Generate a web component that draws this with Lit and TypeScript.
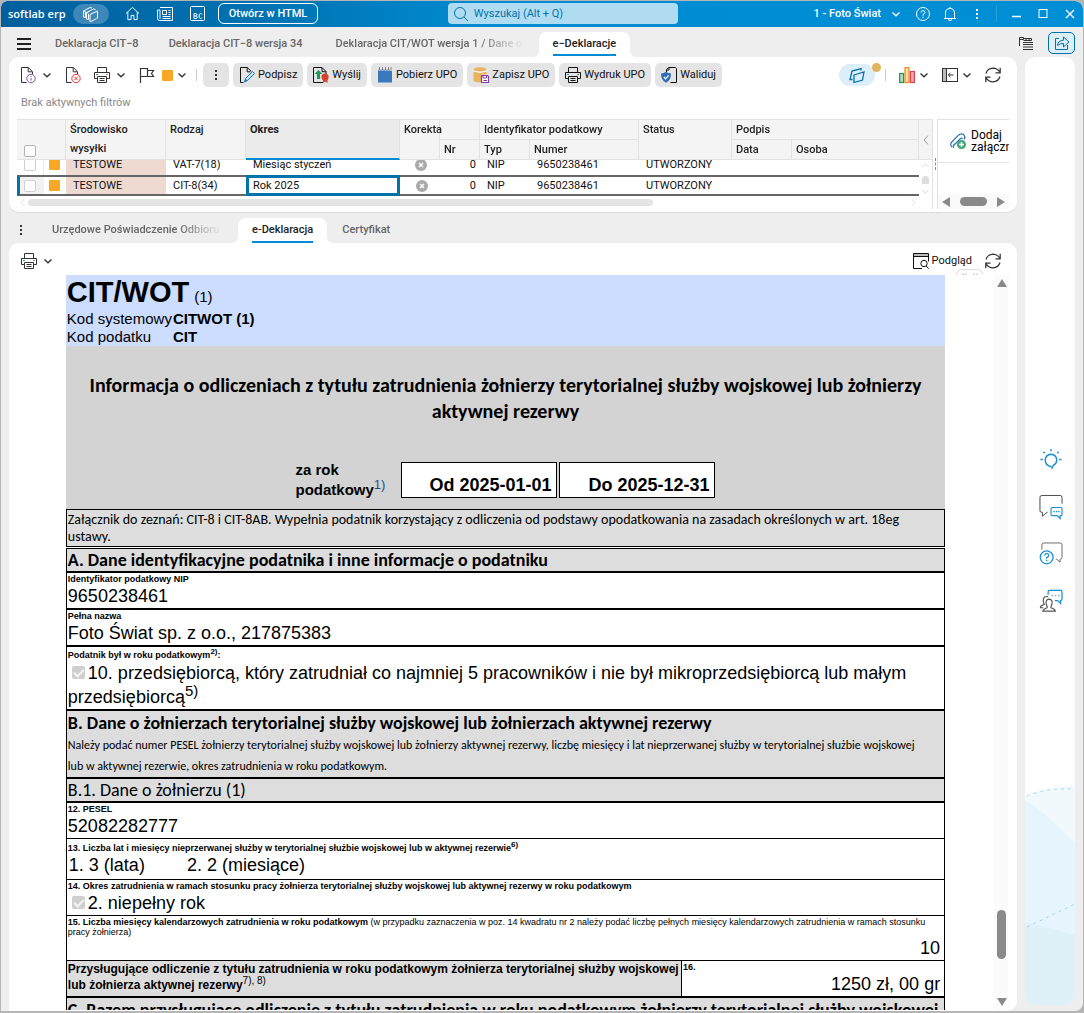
import { LitElement, html, css, svg, nothing } from "lit";
import { customElement, query } from "lit/decorators.js";
import { classMap } from "lit/directives/class-map.js";

const page = svg`<path d="M6.5 15.5H1.5V.5h6.8l4.2 4.2v2.8M8.2.7v4.1h4"/>`;

const glyphs: Record<string, unknown> = {
  chevron: svg`<path d="M4.500 6.500 8 9.800l3.500-3.300" stroke-width="1.300"/>`,
  chevronLeft: svg`<path d="M10 3.500 6 8l4 4.500"/>`,
  chevronRight: svg`<path d="M6 3.500 10 8l-4 4.500"/>`,
  chevronUp: svg`<path d="M4 10 8 6l4 4"/>`,
  chevronDown: svg`<path d="M4 6 8 10l4-4"/>`,
  menu: svg`<path d="M1 3h14M1 8h14M1 13h14" stroke-width="2"/>`,
  dots: svg`<g fill="currentColor" stroke="none"><rect x="7" y="3" width="2" height="2"/><rect x="7" y="7" width="2" height="2"/><rect x="7" y="11" width="2" height="2"/></g>`,
  layers: svg`<path d="M2.500 11.500.5 11V5L7 1.500l2 .5M5.500 13.500 3.500 13V6.500L10.500 3l2 .5M7 15.500V8.500L14.500 5v7L8 15.500zM.5 5l2 .5M3.500 6.500l2 .5M5.500 8v5.500M2.500 6v5.500"/>`,
  stack: svg`<path d="M3.500 12.500H1L3 4l9-2.500v2M5 8l10-3-1.500 8L5 15.500z" stroke-width="1.300"/>`,
  home: svg`<path d="M1 8 8 1.500 15 8M3 6.500v8h3.500V10h3v4.500H13v-8"/>`,
  news: svg`<path d="M3 1.500h12.500v13H2.500A2 2 0 0 1 .5 12.500V4H3v9M5.500 4.500h4v4h-4zM11.500 4.500h2M11.500 6.500h2M11.500 8.500h2M5.500 10.500h8M5.500 12.500h8"/>`,
  bc: svg`<rect x=".5" y=".5" width="14" height="14" rx="1"/><path d="M4 7.500v5h2q1.300 0 1.300-1.300T6 10H4M4 7.500h1.800Q7 7.600 7 8.700T5.800 10M12 8.500Q11.500 7.500 10.500 7.500 9 7.600 9 10t1.500 2.500q1 0 1.500-1"/>`,
  search: svg`<circle cx="7" cy="7" r="5.500"/><path d="m11 11 4 4"/>`,
  help: svg`<circle cx="8" cy="8" r="6.500"/><path d="M6 6.500Q6 4.700 8 4.700t2 1.700Q10 7.500 8 8.500v1.200M8 10.800v1.200"/>`,
  bell: svg`<path d="M8 1v1.500M2 12.500h12M3.500 12.500V7Q3.500 2.500 8 2.500T12.500 7v5.500M6.500 13q0 1.800 1.500 1.800T9.500 13"/>`,
  minimize: svg`<path d="M4 10.500h9" stroke-width="1.300"/>`,
  maximize: svg`<rect x="4" y="3.500" width="8" height="8"/>`,
  close: svg`<path d="m4 4 8 8M12 4l-8 8" stroke-width="1.300"/>`,
  lines: svg`<path d="M1.500 11V2.500h4v2h-4M5.500 3.500h8v2h-8M8 3.500v2M11 3.500v2M5 7.500h10M5 9.500h10M5 12h10M5 14.500h10"/>`,
  share: svg`<path d="M5 3.500H1.500v11h12V10M3.500 10.500Q4 5.500 9.500 5.200V2l5.500 5-5.500 5V8.500Q6 8.200 3.500 10.500z"/>`,
  pageInfo: svg`${page}<g stroke="#8b4a9c"><circle cx="11" cy="11.500" r="4.200"/><path d="M11 11v2.700M11 9v1"/></g>`,
  pageDelete: svg`${page}<g stroke="#e8383d"><circle cx="11" cy="11.500" r="4.200"/><path d="m9.300 9.800 3.400 3.400M12.700 9.800l-3.400 3.400"/></g>`,
  printer: svg`<path d="M3.500 5V.5h9V5M3.500 11.500H.5V5.500h15v6h-3M3.500 9.500h9v6h-9zM5.500 11.500h5M5.500 13.500h5M12.500 7.500h1" /><path d="M2 7.500h2" stroke="#2f8fd0"/>`,
  flag: svg`<path d="M1.500 16V1.500h7v8h-7M8.500 3.500h6l-2 3 2 3h-6" stroke-width="1.200"/>`,
  sign: svg`<path d="M4.500 15.500h-3V.5h6.800l4.200 4.200M8.200.7v4.100h3"/><path d="m5.500 15 1-3.500L13.500 4.500l2 2L8.500 13.500z" fill="#bfe0f5" stroke="#1f78b8"/><path d="M5.500 15l3-1.500-2-2z" fill="#1f78b8" stroke="none"/>`,
  send: svg`<path d="M10 15.500H.5V.5H9l4 4v3M9 .7v4h3.800"/><path d="M5.500 3 9.500 7H7v5H4V7H1.500z" fill="#1a9a60" stroke="none"/><circle cx="12" cy="10" r="3.600" fill="#d5432a" stroke="none"/><path d="M10 12h4.500v4L12 14.500 10 16z" fill="#d5432a" stroke="none"/>`,
  calendar: svg`<path d="M1 2.500h14v13H1z" fill="#3b78bd" stroke="none"/><path d="M2.500 0v4M5.500 0v4M8.500 0v4M11.500 0v4M14 0v4" stroke="#fff" stroke-width="1.600"/><path d="M2.500 0v3.500M5.500 0v3.500M8.500 0v3.500M11.500 0v3.500M14 0v3.500" stroke="#555" stroke-width=".8"/>`,
  save: svg`<ellipse cx="7" cy="2.500" rx="6.500" ry="2.200" fill="#e9b35c" stroke="none"/><path d="M.5 4.500q6.500 2.500 13 0v3H8v7.700q-5 .3-7.500-1.200z" fill="#e9b35c" stroke="none"/><path d="M.5 4q6.500 2.500 13 0" stroke="#fff" stroke-width=".8"/><path d="M8.500 8.500h6l1 1v6h-7z" fill="#fff" stroke="#8a3fa0" stroke-width="1.200"/><path d="M10 8.500v2.500h3.500V8.500M10.500 13.500h3.500" stroke="#8a3fa0"/>`,
  validate: svg`<path d="M5.500 5V2.500l2-2h6.800l1.200 1.200v13.800H9.500M5.500 3H8V.7"/><path d="M0 6.500q3 0 5-1.700 2 1.700 5 1.700 0 7-5 9.300-5-2.300-5-9.300z" fill="#2f6eb5" stroke="none"/><path d="m2.800 10 1.800 1.800 3-3.500" stroke="#fff" stroke-width="1.300"/>`,
  chart: svg`<rect x=".6" y="6.500" width="4" height="9" fill="#a9dcbc" stroke="#1a9c50" stroke-width="1.200"/><rect x="6" y=".6" width="4" height="15" fill="#fbdca6" stroke="#ef8a2b" stroke-width="1.200"/><rect x="11.400" y="4.500" width="4" height="11" fill="#f6a9b2" stroke="#e0434f" stroke-width="1.200"/>`,
  panel: svg`<rect x=".5" y="1.500" width="15" height="13"/><path d="M1 2h3v12H1z" fill="#bbb" stroke="none"/><path d="M4.500 1.500v13M6.500 8h5M8.500 5.800 6.300 8l2.200 2.200"/>`,
  refresh: svg`<path d="M1 6.500Q2.500 1.500 8 1.200q4.500.2 7 4M15.200.8v5h-4.700M15 9.500q-1.500 5-7 5.300-4.500-.2-7-4M.8 15.200v-5h4.700" stroke-width="1.200"/>`,
  preview: svg`<path d="M9 15.500H.5V.5h15v8"/><path d="M1 1h14v2.500H1z" fill="#bbb" stroke="none"/><path d="M.5 3.500h15"/><circle cx="11" cy="10.500" r="3.200"/><path d="m13.200 13 2.500 2.700"/>`,
  clip: svg`<g stroke="#2d6fb3" stroke-width="1.200"><path d="M2 14Q-.5 11.500 1.800 9L8.500 2.200Q11-.2 13.600 1.600 16 4 14 6.500"/><path d="M3.500 12.500 10.500 5.500Q12 4.500 12.500 6M4 14.500Q2 14 4.500 11"/></g><circle cx="11.500" cy="11.500" r="4.500" fill="#3fa778" stroke="none"/><path d="M11.500 9v5M9 11.500h5" stroke="#fff" stroke-width="1.500"/>`,
  bulb: svg`<g stroke="#1b8fd2" stroke-width="1.500"><path d="M12.500 19.500Q6 18.500 6 12.500 6.500 7 12 6.500q5.500.5 6 6-.2 4-3.500 5.500l-1.800 3.500"/><path d="M12 1v2.500M4 4l1.500 1.500M20 4l-1.500 1.500M1 12h2.500M20.500 12H23"/></g>`,
  chat: svg`<path d="M23.500 9V2.500q0-2-2-2h-19q-2 0-2 2v14q0 1.500 2 1.500H3v4l5-4h.5" stroke="#444"/><g stroke="#1b8fd2" stroke-width="1.200"><path d="M12.500 13h9.500q1.500 0 1.500 1.500V20q0 1.500-1.500 1.500h-.5v3l-3-3h-5q-1.500 0-1.500-1.500v-5.500q0-1.500 1.500-1.500z"/><path d="M14.500 17.300h1.500M17 17.300h1.500M19.500 17.300h1.500"/></g>`,
  ask: svg`<path d="M2.500 8V3q0-2 2-2h17q2 0 2 2v13q0 2-2 2v3L18 18h-1" stroke="#666"/><g stroke="#1b8fd2" stroke-width="1.300"><circle cx="7.500" cy="16" r="6.700"/><path d="M5.300 14q.2-2 2.200-2t2.200 2q0 1.200-2.200 2.300v1.200M7.500 18.500V20"/></g>`,
  people: svg`<path d="M9 6V3q0-1.500 1.500-1.500h11.500q1.500 0 1.500 1.500v7.500q0 1.500-1.500 1.500v3L19 12h-3" stroke="#1b8fd2" stroke-width="1.300"/><path d="M12.500 7h1.500M16 7h1.500M19.500 7H21" stroke="#1b8fd2"/><path d="M9 8Q3.500 7 4 12.500q.3 2.500 1 3.500Q1 17 1 19.500h3M10 10.500q-4 .5-3 5 .3 1.500 1 2.500v1.500q-4 1-4.500 3.500h13q-.5-2.500-4.500-3.500v-1.500q.7-1 1-2.500 1-4.500-3-5z" stroke="#555" stroke-width="1.200"/>`,
};

const icon = (name: string, size = 16) =>
  html`<svg class="icon" width=${size} height=${size} viewBox=${size > 20 ? "0 0 24 25" : "0 0 16 16"} aria-hidden="true"
    fill="none" stroke="currentColor" stroke-width="1">${glyphs[name]}</svg>`;

const base = css`
  * { box-sizing: border-box; }
  .icon { display: block; flex: none; overflow: visible; }
  button { font: inherit; color: inherit; background: none; border: 0; padding: 0; margin: 0; cursor: pointer;
    display: flex; align-items: center; justify-content: center; flex: none; }
  .check { appearance: none; margin: 0; width: 12px; height: 12px; border: 1px solid #b4b4b4; border-radius: 2px;
    background: #fff; display: block; }
`;

const tabStyles = css`
  .tabs { display: flex; align-items: flex-end; color: #666; font-weight: 500; }
  .tab { height: 25px; padding: 0 14px 2px; font-weight: 500; position: relative; white-space: nowrap; }
  .tab.fade { overflow: hidden; justify-content: flex-start;
    -webkit-mask-image: linear-gradient(90deg, #000 75%, transparent 100%);
    mask-image: linear-gradient(90deg, #000 75%, transparent 100%); }
  .tab.active { background: #fff; color: #222; border-radius: 8px 8px 0 0; }
  .tab.active::before, .tab.active::after { content: ""; position: absolute; bottom: 0; width: 6px; height: 6px; }
  .tab.active::before { left: -6px; background: radial-gradient(circle at 0 0, transparent 6px, #fff 6px); }
  .tab.active::after { right: -6px; background: radial-gradient(circle at 100% 0, transparent 6px, #fff 6px); }
  .underline { position: absolute; left: 14px; right: 14px; bottom: 1px; height: 2px; background: #008bd2; }
`;

@customElement("title-bar")
class TitleBar extends LitElement {
  static styles = [base, css`
    :host { display: block; color: #fff; }
    .bar { height: 26px; display: flex; align-items: center; justify-content: space-between; padding: 0 5px 1px 7px;
      background: linear-gradient(90deg, #005f9e 0, #0074b3 25%, #008bd2 45%, #008fd6 100%); border-radius: 6px 8px 0 0; }
    .group { display: flex; align-items: center; }
    .brand { font: 600 11px/20px "Open Sans", sans-serif; width: 58px; white-space: nowrap; }
    .pill { width: 36px; height: 20px; border-radius: 10px; background: #3d88b8; margin-left: 7px; }
    .icons { display: flex; gap: 17px; margin: 0 12px 0 16px; }
    .outlined { height: 21px; width: 100px; border: 1px solid #fff; border-radius: 6px; font-weight: 500; }
    .search { display: flex; align-items: center; gap: 5px; width: 230px; height: 21px; padding: 0 5px; border-radius: 4px;
      margin-right: 6px; background: #b0dcf2; color: #0073ab; }
    .search input { flex: 1; min-width: 0; border: 0; background: none; outline: 0; padding: 0; font: inherit; color: inherit; }
    .search input::placeholder { color: #0073ab; opacity: 1; }
    .tools { gap: 11px; }
    .company { gap: 7px; font-weight: 500; }
    .sep { width: 1px; height: 16px; background: #2f9fdc; }
  `];
  render() {
    return html`<header class="bar">
      <div class="group">
        <span class="brand">softlab erp</span>
        <button class="pill" aria-label="Moduły">${icon("layers")}</button>
        <div class="icons">
          <button aria-label="Start">${icon("home", 15)}</button>
          <button aria-label="Aktualności">${icon("news")}</button>
          <button aria-label="BC">${icon("bc")}</button>
        </div>
        <button class="outlined">Otwórz w HTML</button>
      </div>
      <label class="search">${icon("search")}<input type="text" placeholder="Wyszukaj (Alt + Q)" aria-label="Wyszukaj" /></label>
      <div class="group tools">
        <button class="company">1 - Foto Świat ${icon("chevron")}</button>
        <button aria-label="Pomoc">${icon("help")}</button>
        <button aria-label="Powiadomienia">${icon("bell")}</button>
        <button aria-label="Więcej">${icon("dots")}</button>
        <span class="sep"></span>
        <button aria-label="Minimalizuj">${icon("minimize")}</button>
        <button aria-label="Maksymalizuj">${icon("maximize")}</button>
        <button aria-label="Zamknij">${icon("close")}</button>
      </div>
    </header>`;
  }
}

interface Row { kind: string; period: string; selected: boolean }

@customElement("records-panel")
class RecordsPanel extends LitElement {
  static styles = [base, css`
    :host { display: block; }
    .panel { background: #fff; border-radius: 10px; padding: 6px 8px 3px; box-shadow: 0 1px 0 #dcdcdc; }
    .toolbar { display: flex; align-items: center; height: 24px; padding: 0 8px 0 3px; color: #333; }
    .icons { display: flex; align-items: center; }
    .icons .drop { margin: 0 10px 0 3px; }
    .icons .drop.near { margin: 0 6px 0 1px; }
    .right .drop { margin: 0 10px 0 1px; }
    .space { width: 13px; }
    .space.small { width: 7px; }
    .swatch { width: 11px; height: 11px; border-radius: 1px; background: #f9a825; display: block; }
    .sep { width: 1px; height: 12px; background: #ccc; }
    .buttons { display: flex; gap: 4px; margin-left: 6px; }
    .btn { height: 24px; padding: 0 6px; gap: 3px; border-radius: 5px; background: #e4e4e4; color: #111; white-space: nowrap; }
    .more { padding: 0 5px; color: #333; }
    .right { margin-left: auto; display: flex; align-items: center; }
    .pill { position: relative; width: 36px; height: 22px; border-radius: 11px; background: #dceef8; color: #0073ab; margin-right: 10px; }
    .dot { position: absolute; right: -6px; top: -1px; width: 9px; height: 9px; border-radius: 50%; background: #e0b55c; }
    .filters { margin: 0; padding: 8px 4px; line-height: 16px; color: #888; }
    .content { display: flex; height: 90px; }
    .grid { flex: 1; min-width: 0; display: flex; flex-direction: column; }
    .scroll { height: 77px; overflow: hidden; background: #fff; }
    table { width: 100%; border-collapse: separate; border-spacing: 0; table-layout: fixed; color: #111; }
    th, td { padding: 0; font-weight: 400; text-align: left; white-space: nowrap; overflow: hidden; height: 21px; }
    thead { position: sticky; top: 0; z-index: 1; }
    thead th { background: #f4f4f4; font-weight: 500; color: #222; border-top: 1px solid #e2e2e2; border-right: 1px solid #e2e2e2;
      padding: 0 4px; vertical-align: top; line-height: 19px; height: 20px; }
    thead tr:last-child th, thead th[rowspan] { border-bottom: 1px solid #e2e2e2; }
    thead th.korekta { overflow: visible; }
    thead th.pick { padding: 25px 0 0 7px; }
    th.wrap { white-space: normal; }
    thead th.current[rowspan] { background: #ebebeb; font-weight: 700; border-bottom: 2px solid #008bd2; }
    tbody td { padding: 0 7px; border-right: 1px solid transparent; line-height: 17px; }
    tbody td.env { background: #efdad2; }
    td.tick { padding: 0 7px; border-right: 1px solid #e8e8e8; }
    td.tick .check { border-color: #cfcfcf; }
    td.mark { padding: 0 5px; }
    td.num { text-align: right; padding: 0 3px; }
    td.no { padding: 0 0 0 3px; }
    .cross { display: block; margin: auto; width: 12px; height: 12px; }
    tr.selected td { border-top: 2px solid #666; border-bottom: 2px solid #666; border-right: 0; }
    tr.selected td.num { padding-right: 4px; }
    tr.selected td.tick { border-left: 3px solid #0073ab; padding: 0 4px; background: #f2f2f2; }
    tr.selected td.focus { border: 3px solid #0073ab; padding: 0 4px; line-height: 15px; }
    .hbar { display: flex; align-items: center; height: 13px; color: #ccc; }
    .htrack { flex: 1; }
    .hthumb { width: 71%; height: 7px; border-radius: 4px; background: #e4e4e4; }
    .gutter { width: 14px; display: flex; flex-direction: column; align-items: center; color: #ccc; border-right: 1px solid #e2e2e2; flex: none; }
    .collapse { width: 100%; height: 41px; background: #f4f4f4; border-top: 1px solid #e2e2e2; border-bottom: 1px solid #e2e2e2; color: #999; }
    .vthumb { width: 7px; height: 8px; margin: 5px 0 2px; border-radius: 4px 4px 0 0; background: #ddd; }
    .gutter .icon { margin: -1px 0; }
    .split { width: 5px; border-right: 1px solid #e2e2e2; display: flex; align-items: center; justify-content: center; flex: none; }
    .grip { width: 1px; height: 12px; border-left: 1px dashed #888; }
    .files { width: 71px; display: flex; flex-direction: column; overflow: hidden; border-top: 1px solid #e2e2e2; flex: none; }
    .add { height: 43px; border-bottom: 1px solid #e2e2e2; width: 100%; justify-content: flex-start; padding-left: 12px; gap: 5px;
      text-align: left; font-size: 12px; line-height: 12px; color: #000; }
    .fbar { margin-top: auto; display: flex; align-items: center; justify-content: space-between; height: 15px; padding: 0 4px; background: #fafafa; }
    .fthumb { width: 27px; height: 9px; border-radius: 5px; background: #8a8a8a; }
  `];

  @query(".scroll") scroller!: HTMLElement;

  firstUpdated() {
    this.scroller.scrollTop = this.scroller.scrollHeight;
  }

  rows: Row[] = [
    { kind: "VAT-7(18)", period: "Miesiąc styczeń", selected: false },
    { kind: "CIT-8(34)", period: "Rok 2025", selected: true },
  ];

  renderRow(r: Row) {
    return html`<tr class=${classMap({ selected: r.selected })}>
      <td class="tick"><input class="check" type="checkbox" aria-label=${r.kind} /></td>
      <td class="mark"><span class="swatch"></span></td>
      <td class="env">TESTOWE</td>
      <td>${r.kind}</td>
      <td class=${classMap({ focus: r.selected })}>${r.period}</td>
      <td class="no"><svg class="cross" viewBox="0 0 12 12" role="img" aria-label="Nie"><circle cx="6" cy="6" r="6" fill="#aaa"/><path d="m4 4 4 4M8 4 4 8" stroke="#fff" stroke-width="1.500"/></svg></td>
      <td class="num">0</td>
      <td>NIP</td>
      <td>9650238461</td>
      <td>UTWORZONY</td>
      <td></td>
      <td></td>
    </tr>`;
  }

  renderTriangle(points: string) {
    return html`<svg class="icon" width="8" height="10" viewBox="0 0 8 10" aria-hidden="true"><polygon points=${points} fill="#8a8a8a"/></svg>`;
  }

  render() {
    const actions: [string, string][] = [
      ["sign", "Podpisz"], ["send", "Wyślij"], ["calendar", "Pobierz UPO"],
      ["save", "Zapisz UPO"], ["printer", "Wydruk UPO"], ["validate", "Waliduj"],
    ];
    return html`<section class="panel">
      <div class="toolbar">
        <div class="icons">
          <button aria-label="Informacje">${icon("pageInfo")}</button>
          <button class="drop" aria-label="Opcje informacji">${icon("chevron")}</button>
          <button aria-label="Usuń">${icon("pageDelete")}</button>
          <span class="space"></span>
          <button aria-label="Drukuj">${icon("printer")}</button>
          <button class="drop" aria-label="Opcje druku">${icon("chevron")}</button>
          <button aria-label="Oznacz">${icon("flag")}</button>
          <span class="space small"></span>
          <button aria-label="Kolor"><span class="swatch"></span></button>
          <button class="drop near" aria-label="Wybór koloru">${icon("chevron")}</button>
          <span class="sep"></span>
        </div>
        <div class="buttons">
          <button class="btn more" aria-label="Więcej">${icon("dots")}</button>
          ${actions.map(([glyph, label]) => html`<button class="btn">${icon(glyph)}${label}</button>`)}
        </div>
        <div class="right icons">
          <button class="pill" aria-label="Warstwy">${icon("stack")}<span class="dot"></span></button>
          <span class="sep"></span>
          <span class="space"></span>
          <button aria-label="Wykres">${icon("chart")}</button>
          <button class="drop" aria-label="Opcje wykresu">${icon("chevron")}</button>
          <button aria-label="Panel">${icon("panel")}</button>
          <button class="drop" aria-label="Opcje panelu">${icon("chevron")}</button>
          <button aria-label="Odśwież">${icon("refresh")}</button>
        </div>
      </div>
      <p class="filters">Brak aktywnych filtrów</p>
      <div class="content">
        <div class="grid">
          <div class="scroll">
            <table>
              <colgroup>
                ${[27, 22, 100, 80, 154, 40, 40, 50, 109, 93, 60].map((w) => html`<col style="width:${w}px" />`)}
                <col />
              </colgroup>
              <thead>
                <tr>
                  <th class="pick" colspan="2" rowspan="2"><input class="check" type="checkbox" aria-label="Zaznacz wszystkie" /></th>
                  <th class="wrap" rowspan="2">Środowisko wysyłki</th>
                  <th rowspan="2">Rodzaj</th>
                  <th class="current" rowspan="2">Okres</th>
                  <th class="korekta" rowspan="2">Korekta</th>
                  <th></th>
                  <th colspan="2">Identyfikator podatkowy</th>
                  <th rowspan="2">Status</th>
                  <th colspan="2">Podpis</th>
                </tr>
                <tr><th>Nr</th><th>Typ</th><th>Numer</th><th>Data</th><th>Osoba</th></tr>
              </thead>
              <tbody>${this.rows.map((r) => this.renderRow(r))}</tbody>
            </table>
          </div>
          <div class="hbar">${icon("chevronLeft", 11)}<div class="htrack"><div class="hthumb"></div></div>${icon("chevronRight", 11)}</div>
        </div>
        <div class="gutter">
          <button class="collapse" aria-label="Zwiń">${icon("chevronLeft")}</button>
          ${icon("chevronUp", 13)}<span class="vthumb"></span>${icon("chevronDown", 13)}
        </div>
        <div class="split"><span class="grip"></span></div>
        <div class="files">
          <button class="add">${icon("clip")}<span>Dodaj załącznik</span></button>
          <div class="fbar">${this.renderTriangle("8,0 0,5 8,10")}<span class="fthumb"></span>${this.renderTriangle("0,0 8,5 0,10")}</div>
        </div>
      </div>
    </section>`;
  }
}

@customElement("tax-form")
class TaxForm extends LitElement {
  static styles = [base, css`
    :host { display: block; width: 90%; margin: 0 auto; color: #000; font-family: "Liberation Sans", Arial, sans-serif; }
    .codes { background: #ccddff; padding-left: 1px; font-size: 15px; }
    h1 { margin: 0; font-size: 29px; line-height: 35px; }
    h1 small { font-size: 15px; font-weight: 400; margin-left: 5px; line-height: 15px; }
    .codes table { border-collapse: collapse; line-height: 18px; }
    .codes td, .codes th { padding: 0; text-align: left; font-weight: 400; white-space: nowrap; }
    .codes th { min-width: 105px; padding-right: 1px; }
    .codes td { font-weight: 700; }
    .head { background: #d3d3d3; padding: 26px 0 9px; }
    h2 { margin: 0 0 38px; text-align: center; font: 700 20px/26px Carlito, Lato, sans-serif; }
    .year { display: flex; justify-content: center; gap: 2px; font-weight: 700; }
    .year p { margin: -2px 0 0; width: 104px; font-size: 15px; line-height: 20px; }
    sup { line-height: 0; }
    .ref { color: #1f4e8c; font-weight: 400; font-size: 13px; }
    .date { width: 156px; height: 36px; background: #fff; border: 1px solid #000; padding: 12px 5px 0 0; text-align: right; font-size: 18px; line-height: 21px; }
    .note { margin: 0 0 1px; border: 1px solid #000; background: #ddd; padding: 1px 1px; font: 14px/17px Carlito, Lato, sans-serif; }
    .sheet { border: 1px solid #000; border-bottom: 0; }
    .row { border-bottom: 1px solid #000; padding: 0 1px; }
    .thick { border-bottom-width: 2px; }
    .gray { background: #ddd; }
    h3 { margin: 0; font: 700 18px/22px Carlito, Lato, sans-serif; }
    h3.tall { line-height: 24px; }
    h3.light { font-weight: 400; }
    .hint { margin: 0; padding-right: 16px; font: 12px/21px Carlito, Lato, sans-serif; }
    .label { display: block; font-size: 9px; line-height: 12px; font-weight: 700; }
    .label sup { font-size: 8px; }
    .label.two { line-height: 10px; padding-top: 1px; }
    .label.two span { font-weight: 400; }
    .value { font-size: 18px; line-height: 23px; }
    .value.wide { line-height: 24px; }
    .value.end { text-align: right; padding-right: 3px; }
    .value sup { font-size: 15px; }
    .company { padding-top: 2px; }
    .service { padding-top: 3px; padding-bottom: 2px; }
    .pair { display: flex; gap: 42px; padding-left: 1px; }
    .done { appearance: none; display: inline-block; width: 13px; height: 13px; margin: 0 3px 0 4px; border-radius: 2px; background: #cfcfcf; position: relative; }
    .done::before { content: ""; position: absolute; left: 4px; top: 1px; width: 4px; height: 8px; border: solid #f4f4f4; border-width: 0 2px 2px 0; transform: rotate(45deg); }
    .relief { display: grid; grid-template-columns: 615fr 262fr; padding: 0; }
    .relief .what { background: #ddd; border-right: 1px solid #000; padding: 0 1px; font-size: 12px; line-height: 16px; font-weight: 700; }
    .what sup { font-weight: 400; font-size: 10px; }
    .relief .amount { padding: 0 1px; }
  `];

  field(label: unknown, value: string, extra = "") {
    return html`<div class="row ${extra}"><span class="label">${label}</span><div class="value">${value}</div></div>`;
  }

  render() {
    return html`<article>
      <div class="codes">
        <h1>CIT/WOT<small>(1)</small></h1>
        <table>
          <tr><th>Kod systemowy</th><td>CITWOT (1)</td></tr>
          <tr><th>Kod podatku</th><td>CIT</td></tr>
        </table>
      </div>
      <div class="head">
        <h2>Informacja o odliczeniach z tytułu zatrudnienia żołnierzy terytorialnej służby wojskowej lub żołnierzy aktywnej rezerwy</h2>
        <div class="year">
          <p>za rok<br />podatkowy<sup class="ref">1)</sup></p>
          <div class="date">Od 2025-01-01</div>
          <div class="date">Do 2025-12-31</div>
        </div>
      </div>
      <p class="note">Załącznik do zeznań: CIT-8 i CIT-8AB. Wypełnia podatnik korzystający z odliczenia od podstawy opodatkowania na zasadach określonych w art. 18eg ustawy.</p>
      <div class="sheet">
        <div class="row thick gray"><h3>A. Dane identyfikacyjne podatnika i inne informacje o podatniku</h3></div>
        ${this.field("Identyfikator podatkowy NIP", "9650238461", "thick")}
        ${this.field("Pełna nazwa", "Foto Świat sp. z o.o., 217875383", "thick")}
        <div class="row thick company">
          <span class="label">Podatnik był w roku podatkowym<sup>2)</sup>:</span>
          <div class="value wide"><label><input class="done" type="checkbox" checked disabled />10. przedsiębiorcą, który zatrudniał co najmniej 5 pracowników i nie był mikroprzedsiębiorcą lub małym przedsiębiorcą<sup>5)</sup></label></div>
        </div>
        <div class="row thick gray">
          <h3 class="tall">B. Dane o żołnierzach terytorialnej służby wojskowej lub żołnierzach aktywnej rezerwy</h3>
          <p class="hint">Należy podać numer PESEL żołnierzy terytorialnej służby wojskowej lub żołnierzy aktywnej rezerwy, liczbę miesięcy i lat nieprzerwanej służby w terytorialnej służbie wojskowej lub w aktywnej rezerwie, okres zatrudnienia w roku podatkowym.</p>
        </div>
        <div class="row thick gray"><h3 class="light">B.1. Dane o żołnierzu (1)</h3></div>
        ${this.field("12. PESEL", "52082282777")}
        <div class="row service">
          <span class="label">13. Liczba lat i miesięcy nieprzerwanej służby w terytorialnej służbie wojskowej lub w aktywnej rezerwie<sup>6)</sup></span>
          <div class="value pair"><span>1. 3 (lata)</span><span>2. 2 (miesiące)</span></div>
        </div>
        <div class="row">
          <span class="label">14. Okres zatrudnienia w ramach stosunku pracy żołnierza terytorialnej służby wojskowej lub aktywnej rezerwy w roku podatkowym</span>
          <div class="value"><label><input class="done" type="checkbox" checked disabled />2. niepełny rok</label></div>
        </div>
        <div class="row">
          <span class="label two">15. Liczba miesięcy kalendarzowych zatrudnienia w roku podatkowym <span>(w przypadku zaznaczenia w poz. 14 kwadratu nr 2 należy podać liczbę pełnych miesięcy kalendarzowych zatrudnienia w ramach stosunku pracy żołnierza)</span></span>
          <div class="value end">10</div>
        </div>
        <div class="row thick relief">
          <div class="what">Przysługujące odliczenie z tytułu zatrudnienia w roku podatkowym żołnierza terytorialnej służby wojskowej lub żołnierza aktywnej rezerwy<sup>7), 8)</sup></div>
          <div class="amount"><span class="label">16.</span><div class="value end">1250 zł, 00 gr</div></div>
        </div>
        <div class="row gray"><h3 class="tall">C. Razem przysługujące odliczenie z tytułu zatrudnienia w roku podatkowym żołnierzy terytorialnej służby wojskowej lub żołnierzy aktywnej rezerwy</h3></div>
      </div>
    </article>`;
  }
}

@customElement("side-rail")
class SideRail extends LitElement {
  static styles = [base, css`
    :host { display: flex; flex-direction: column; align-items: center; width: 50px; background: #fff; border-radius: 10px;
      overflow: hidden; color: #444; }
    nav { margin: auto 0 0; display: flex; flex-direction: column; gap: 23px; padding: 0 0 172px 2px; }
    .wave { display: block; width: 100%; height: 220px; flex: none; }
  `];
  render() {
    return html`<nav aria-label="Pomoc">
        ${[["bulb", "Wskazówki"], ["chat", "Czat"], ["ask", "Pytania"], ["people", "Społeczność"]].map(
          ([g, l]) => html`<button aria-label=${l}>${icon(g, 24)}</button>`)}
      </nav>
      <svg class="wave" viewBox="0 0 50 220" preserveAspectRatio="none" aria-hidden="true">
        <path d="M0 11Q24 0 50 1V220H0z" fill="#f1f9fd"/>
        <path d="M0 16Q10 18 50 58V220H0z" fill="#e6f4fd"/>
        <path d="M0 137 50 150V220H0z" fill="#def1f9"/>
        <path d="M2 11Q20 3 50 4M2 142 50 119" fill="none" stroke="#a3d8f3" stroke-dasharray="3 4"/>
      </svg>`;
  }
}

@customElement("app-root")
class AppRoot extends LitElement {
  static styles = [base, tabStyles, css`
    :host { display: block; height: 100vh; background: #b5b5b5; padding: 1px 1px 2px; overflow: hidden;
      box-sizing: border-box; font: 11px/16px Roboto, sans-serif; color: #222; }
    .window { height: 100%; display: flex; flex-direction: column; background: #eee; border-radius: 6px 8px 8px 0; overflow: hidden; }
    .top { height: 30px; padding: 0 8px 0 15px; flex: none; }
    .menu { height: 26px; margin-right: 9px; color: #222; }
    .top .tab + .tab { margin-left: 2px; }
    .top .tab.fade { width: 202px; margin-left: 5px; }
    .top .tab.active { margin-left: 15px; }
    .end { margin-left: auto; display: flex; align-items: center; gap: 14px; height: 28px; color: #333; }
    .share { width: 27px; height: 22px; border: 1px solid #0073ab; border-radius: 5px; background: #dceef8; color: #0073ab; }
    .body { flex: 1; min-height: 0; display: flex; gap: 8px; padding: 0 8px 0 8px; }
    main { flex: 1; min-width: 0; display: flex; flex-direction: column; }
    .sub { height: 31px; padding-left: 4px; flex: none; }
    .sub .more { height: 27px; margin-right: 9px; color: #333; }
    .sub .tab.fade { width: 184px; }
    .sub .tab.active { margin: 0 1px 0 16px; }
    .sub .underline { bottom: 0; }
    .viewer { flex: 1; min-height: 0; display: flex; flex-direction: column; background: #fff; border-radius: 10px 10px 10px 0; padding: 0 8px 1px; }
    .tools { position: relative; display: flex; align-items: center; height: 32px; flex: none; padding: 4px 8px 0 4px; color: #333; }
    .tools .drop { margin-left: 3px; }
    .preview { margin-left: auto; gap: 3px; margin-right: 13px; color: #111; }
    .fold { position: absolute; right: 26px; bottom: 0; width: 27px; height: 6px; overflow: hidden; border: 1px solid #ddd; border-bottom: 0;
      border-radius: 10px 10px 0 0; color: #777; align-items: flex-start; gap: 2px; }
    .doc { flex: 1; min-height: 0; display: flex; }
    .paper { flex: 1; min-width: 0; overflow: hidden; }
    .vbar { width: 15px; display: flex; flex-direction: column; align-items: center; justify-content: space-between; padding: 4px 0; background: #fbfbfb; }
    .vspace { flex: 16; }
    .vspace.after { flex: 1; }
    .vthumb { width: 9px; height: 49px; border-radius: 5px; background: #8a8a8a; }
    side-rail { margin-bottom: 6px; }
  `];

  renderArrow(points: string) {
    return html`<svg class="icon" width="10" height="8" viewBox="0 0 10 8" aria-hidden="true"><polygon points=${points} fill="#8a8a8a"/></svg>`;
  }

  tab(label: string, kind = "") {
    return html`<button class="tab ${kind}">${label}${kind === "active" ? html`<span class="underline"></span>` : nothing}</button>`;
  }

  render() {
    return html`<div class="window">
      <title-bar></title-bar>
      <nav class="tabs top" aria-label="Okna">
        <button class="menu" aria-label="Menu">${icon("menu")}</button>
        ${this.tab("Deklaracja CIT−8")}${this.tab("Deklaracja CIT−8 wersja 34")}
        ${this.tab("Deklaracja CIT/WOT wersja 1 / Dane o", "fade")}${this.tab("e−Deklaracje", "active")}
        <div class="end">
          <button aria-label="Lista okien">${icon("lines")}</button>
          <button class="share" aria-label="Udostępnij">${icon("share")}</button>
        </div>
      </nav>
      <div class="body">
        <main>
          <records-panel></records-panel>
          <nav class="tabs sub" aria-label="Szczegóły">
            <button class="more" aria-label="Więcej">${icon("dots")}</button>
            ${this.tab("Urzędowe Poświadczenie Odbioru", "fade")}${this.tab("e-Deklaracja", "active")}${this.tab("Certyfikat")}
          </nav>
          <section class="viewer">
            <div class="tools">
              <button aria-label="Drukuj">${icon("printer")}</button>
              <button class="drop" aria-label="Opcje druku">${icon("chevron")}</button>
              <button class="preview">${icon("preview")}Podgląd</button>
              <button aria-label="Odśwież">${icon("refresh")}</button>
              <button class="fold" aria-label="Rozwiń">${icon("chevronDown", 9)}${icon("chevronDown", 9)}</button>
            </div>
            <div class="doc">
              <div class="paper"><tax-form></tax-form></div>
              <div class="vbar">${this.renderArrow("0,8 5,0 10,8")}<span class="vspace"></span><span class="vthumb"></span><span class="vspace after"></span>${this.renderArrow("0,0 5,8 10,0")}</div>
            </div>
          </section>
        </main>
        <side-rail></side-rail>
      </div>
    </div>`;
  }
}
